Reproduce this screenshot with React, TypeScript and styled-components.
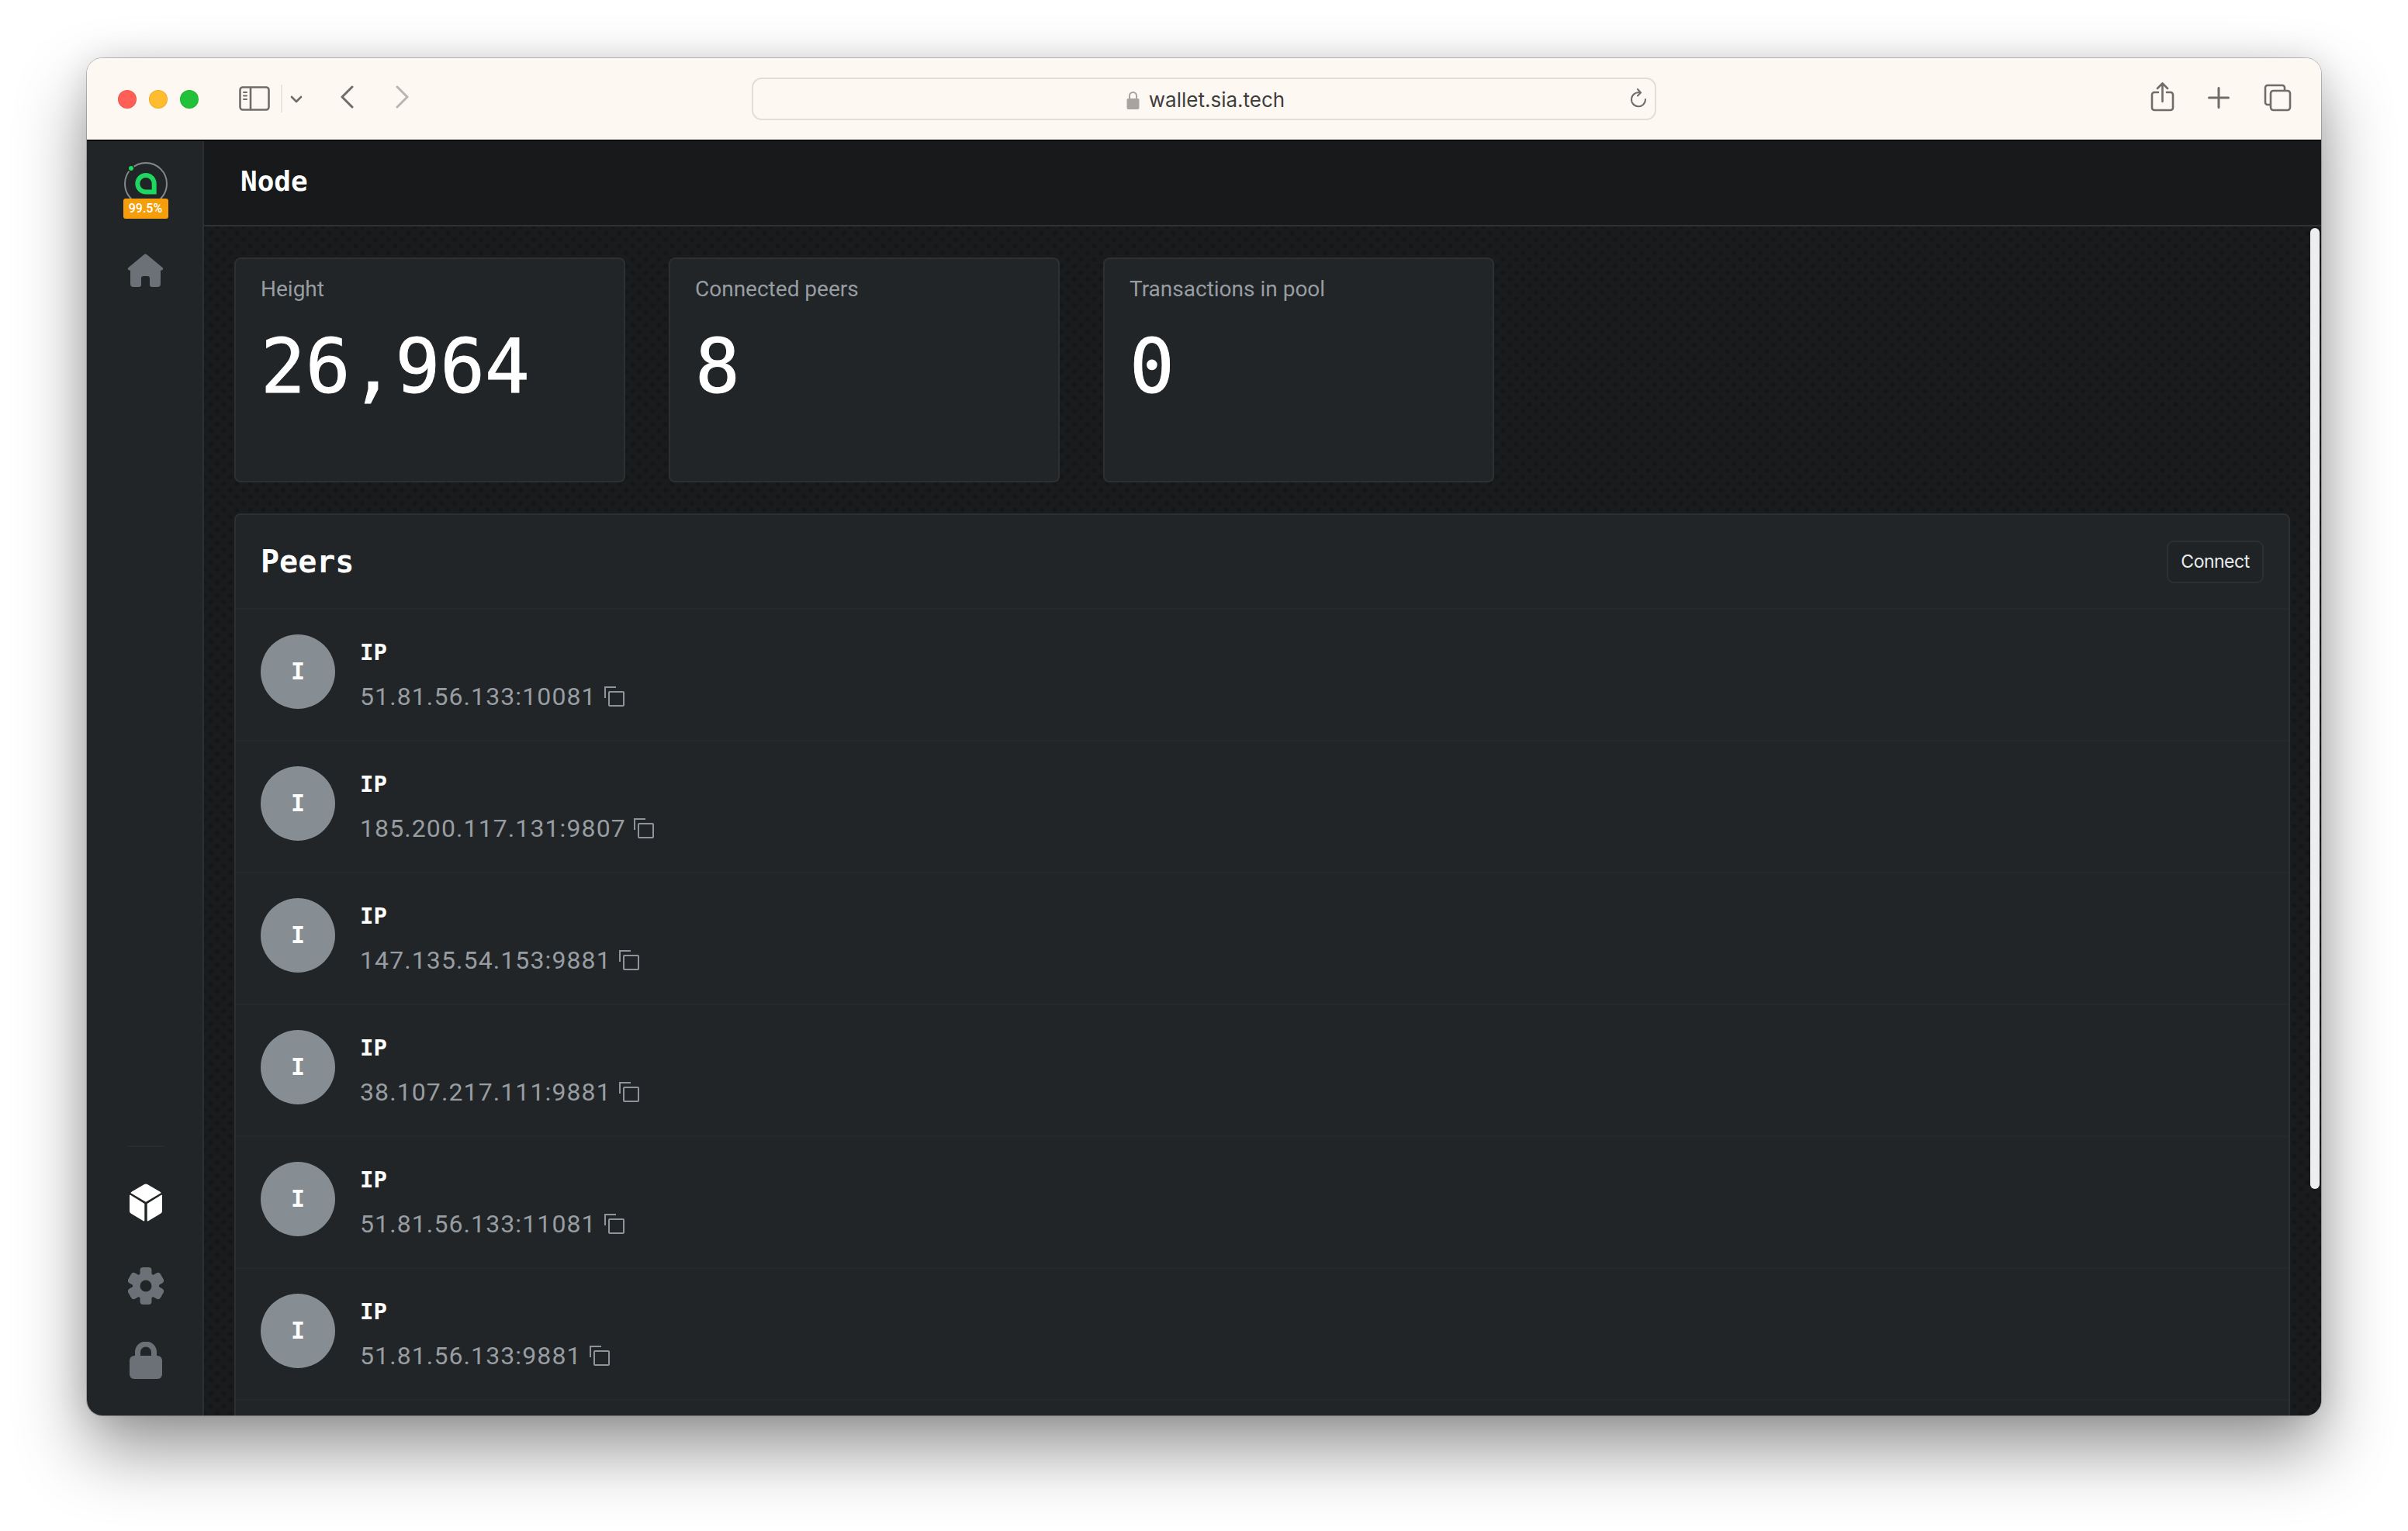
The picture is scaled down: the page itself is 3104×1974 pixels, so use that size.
import React from 'react';
import styled, { createGlobalStyle } from 'styled-components';

const Global = createGlobalStyle`
  html, body { margin: 0; padding: 0; background: #fff; }
  * { box-sizing: border-box; }
`;

const MONO = `"DejaVu Sans Mono", "Liberation Mono", monospace`;
const SANS = `"Roboto", "Noto Sans", sans-serif`;
const UI = `"Inter", "Liberation Sans", sans-serif`;

const Page = styled.div`
  width: 3104px;
  height: 1974px;
  padding: 75px 112px 149px;
  overflow: hidden;
  background: #fff;
`;
const Win = styled.div`
  width: 2880px;
  height: 1750px;
  border-radius: 20px;
  overflow: hidden;
  display: flex;
  flex-direction: column;
  box-shadow: 0 0 0 1px rgba(0, 0, 0, 0.22), 0 44px 90px rgba(0, 0, 0, 0.42), 0 0 40px rgba(0, 0, 0, 0.1);
`;
const Chrome = styled.div`
  height: 107px;
  flex: none;
  background: #fdf8f2;
  border-bottom: 2px solid #0c0d0e;
  display: flex;
  align-items: flex-start;
  padding: 25px 38px 0 40px;
`;
const Lights = styled.div`
  display: flex;
  gap: 16px;
  margin-top: 16px;
`;
const Light = styled.span<{ $c: string }>`
  width: 24px;
  height: 24px;
  border-radius: 50%;
  background: ${(p) => p.$c};
  box-shadow: inset 0 0 0 1px rgba(0, 0, 0, 0.08);
`;
const ToolIcon = styled.svg<{ $ml: number; $mt: number }>`
  display: block;
  flex: none;
  margin-left: ${(p) => p.$ml}px;
  margin-top: ${(p) => p.$mt}px;
  fill: none;
  stroke: #716c67;
  stroke-width: 2.6;
  stroke-linecap: round;
  stroke-linejoin: round;
`;
const Url = styled.div`
  position: relative;
  flex: none;
  width: 1166px;
  height: 55px;
  margin-left: 441px;
  margin-right: auto;
  border: 2px solid #e3ddd7;
  border-radius: 13px;
  display: flex;
  align-items: center;
  justify-content: center;
  gap: 12px;
  color: #403e3c;
  font: 400 26px/1 ${UI};
  padding-top: 2px;
  padding-left: 4px;
`;
const Reload = styled.svg`
  position: absolute;
  right: 10px;
  top: 12px;
  fill: none;
  stroke: #716c67;
  stroke-width: 2;
  stroke-linecap: round;
  stroke-linejoin: round;
`;
const Body = styled.div`
  flex: 1;
  min-height: 0;
  display: flex;
`;
const Side = styled.aside`
  width: 151px;
  flex: none;
  background: #212527;
  border-right: 2px solid #2c3033;
  display: flex;
  flex-direction: column;
  align-items: center;
  padding: 26px 0 47px 2px;
`;
const Logo = styled.div`
  position: relative;
  width: 58px;
  height: 74px;
`;
const Badge = styled.div`
  position: absolute;
  left: 0;
  bottom: 0;
  width: 58px;
  height: 26px;
  background: #f59e0b;
  border-radius: 3px;
  color: #fff;
  font: 500 16px/26px ${SANS};
  text-align: center;
`;
const SideIcon = styled.svg<{ $mt: number }>`
  display: block;
  flex: none;
  margin-top: ${(p) => p.$mt}px;
`;
const SideRule = styled.div`
  width: 48px;
  height: 2px;
  margin-top: auto;
  background: #272b2e;
`;
const Content = styled.div`
  flex: 1;
  min-width: 0;
  display: flex;
  flex-direction: column;
  background: #17191b;
`;
const Head = styled.header`
  height: 110px;
  flex: none;
  padding: 0 0 4px 47px;
  border-bottom: 2px solid #2e3235;
  display: flex;
  align-items: center;
  color: #fff;
  font: 700 36px/1 ${MONO};
`;
const Main = styled.main`
  position: relative;
  flex: 1;
  min-height: 0;
  overflow: hidden;
  padding: 40px 40px 0 39px;
  background-color: #191b1d;
  background-image: radial-gradient(circle, #141617 2px, transparent 4px),
    radial-gradient(circle, #141617 2px, transparent 4px);
  background-size: 17px 17px;
  background-position: 0 0, 8.5px 8.5px;
`;
const Scroll = styled.div`
  position: absolute;
  top: 2px;
  right: 2px;
  width: 12px;
  height: 1239px;
  border-radius: 6px;
  background: #eceef0;
`;
const Stats = styled.div`
  display: flex;
  gap: 56px;
`;
const Card = styled.section`
  width: 504px;
  height: 290px;
  padding: 21px 32px;
  background: #212527;
  border: 2px solid #2c3033;
  border-radius: 8px;
`;
const Label = styled.div`
  color: #979da2;
  font: 400 28px/36px ${SANS};
`;
const Value = styled.div`
  margin-top: 28px;
  color: #fff;
  font: 400 96px/108px ${MONO};
  -webkit-text-stroke: 1px #fff;
`;
const Panel = styled.section`
  margin-top: 40px;
  padding-bottom: 60px;
  background: #212527;
  border: 2px solid #2c3033;
  border-radius: 8px;
`;
const PanelHead = styled.div`
  height: 122px;
  border-bottom: 2px solid #25292b;
  display: flex;
  align-items: center;
  justify-content: space-between;
  padding: 0 32px;
`;
const Title = styled.h2`
  margin: 0;
  color: #fff;
  font: 700 40px/1 ${MONO};
`;
const Btn = styled.button`
  width: 125px;
  height: 55px;
  padding: 0;
  background: #1f2325;
  border: 2px solid #2c3033;
  border-radius: 9px;
  color: #e9ebed;
  font: 400 23px/1 ${UI};
  letter-spacing: -0.5px;
`;
const Row = styled.div`
  height: 170px;
  border-bottom: 2px solid #25292b;
  display: flex;
  align-items: flex-start;
  gap: 32px;
  padding: 32px 32px 0;
`;
const Avatar = styled.div`
  width: 96px;
  height: 96px;
  border-radius: 50%;
  background: #868d93;
  display: flex;
  align-items: center;
  justify-content: center;
  color: #fff;
  font: 700 30px/1 ${MONO};
  flex: none;
`;
const Info = styled.div`
  display: flex;
  flex-direction: column;
`;
const Key = styled.div`
  color: #fff;
  margin-top: 1px;
  font: 700 29px/44px ${MONO};
`;
const Addr = styled.div`
  margin-top: 15px;
  display: flex;
  align-items: center;
  gap: 10px;
  color: #979da2;
  letter-spacing: 1.1px;
  font: 400 32px/40px ${SANS};
`;

const CopyIcon = () => (
  <svg width="26" height="26" viewBox="0 0 26 26" fill="none" stroke="#8e9499" strokeWidth="2">
    <path d="M1 15V1h14" />
    <rect x="6" y="7" width="19" height="18" rx="1" />
  </svg>
);

const peers = [
  '51.81.56.133:10081',
  '185.200.117.131:9807',
  '147.135.54.153:9881',
  '38.107.217.111:9881',
  '51.81.56.133:11081',
  '51.81.56.133:9881',
];

export default function App() {
  return (
    <Page>
      <Global />
      <Win>
        <Chrome>
          <Lights>
            <Light $c="#ff5f57" />
            <Light $c="#febc2e" />
            <Light $c="#22c13a" />
          </Lights>
          <ToolIcon $ml={52} $mt={11} width="40" height="32" viewBox="0 0 40 32">
            <rect x="1.5" y="1.5" width="37" height="29" rx="3.5" />
            <path d="M15 2v28" />
            <path d="M6 8h4M6 12.500h4M6 17h4" strokeWidth="2" />
          </ToolIcon>
          <ToolIcon $ml={14} $mt={9} width="2" height="36" viewBox="0 0 2 36" style={{ stroke: '#e9e4de' }}>
            <path d="M1 0v36" strokeWidth="2" />
          </ToolIcon>
          <ToolIcon $ml={10} $mt={23} width="16" height="11" viewBox="0 0 16 11">
            <path d="M2 2l6 6 6-6" />
          </ToolIcon>
          <ToolIcon $ml={48} $mt={10} width="18" height="30" viewBox="0 0 18 30">
            <path d="M16 2L3 15l13 13" strokeWidth="3" />
          </ToolIcon>
          <ToolIcon $ml={54} $mt={10} width="18" height="30" viewBox="0 0 18 30" style={{ stroke: '#b9b5b0' }}>
            <path d="M2 2l13 13L2 28" strokeWidth="3" />
          </ToolIcon>
          <Url>
            <svg width="17" height="24" viewBox="0 0 17 24">
              <path d="M4 11V6.500a4.500 4.500 0 0 1 9 0V11" fill="none" stroke="#a8a39e" strokeWidth="2" />
              <rect x="0.500" y="10" width="16" height="14" rx="2" fill="#a8a39e" />
            </svg>
            wallet.sia.tech
            <Reload width="22" height="27" viewBox="0 0 22 27">
              <path d="M13 5.500A9 9 0 1 0 20 14" />
              <path d="M10 1l4 4.500-4 4" />
            </Reload>
          </Url>
          <ToolIcon $ml={0} $mt={6} width="31" height="38" viewBox="0 0 31 38">
            <path d="M10 13H5a3 3 0 0 0-3 3v17a3 3 0 0 0 3 3h21a3 3 0 0 0 3-3V16a3 3 0 0 0-3-3h-5" />
            <path d="M15.500 25V2M9 8l6.500-6.500L22 8" />
          </ToolIcon>
          <ToolIcon $ml={43} $mt={12} width="28" height="28" viewBox="0 0 28 28">
            <path d="M14 1.500v25M1.500 14h25" strokeWidth="3" />
          </ToolIcon>
          <ToolIcon $ml={44} $mt={8} width="36" height="36" viewBox="0 0 36 36">
            <path d="M8 27H5a3 3 0 0 1-3-3V5a3 3 0 0 1 3-3h19a3 3 0 0 1 3 3v3" />
            <rect x="9" y="9" width="25" height="25" rx="3.500" />
          </ToolIcon>
        </Chrome>
        <Body>
          <Side>
            <Logo>
              <svg width="58" height="58" viewBox="0 0 58 58">
                <circle cx="29" cy="29" r="27" fill="none" stroke="#84898d" strokeWidth="2" />
                <circle cx="10" cy="9" r="3" fill="#1ed660" stroke="#212527" strokeWidth="3" paintOrder="stroke" />
                <path
                  fill="#1ed660"
                  fillRule="evenodd"
                  d="M29 15a13.700 13.700 0 0 1 13.700 13.700V42.400H29A13.700 13.700 0 0 1 29 15zM29 21a7.700 7.700 0 0 0 0 15.400h7.700V28.700A7.700 7.700 0 0 0 29 21z"
                />
              </svg>
              <Badge>99.5%</Badge>
            </Logo>
            <SideIcon $mt={45} width="47" height="43" viewBox="0 0 47 43" fill="#6b7177">
              <path d="M22 1a2.500 2.500 0 0 1 3 0l20.500 17a2 2 0 0 1-1.200 3.500H43V39a4 4 0 0 1-4 4h-7a3 3 0 0 1-3-3V32a3 3 0 0 0-3-3h-5a3 3 0 0 0-3 3v8a3 3 0 0 1-3 3H8a4 4 0 0 1-4-4V21.500H2.700A2 2 0 0 1 1.500 18z" />
            </SideIcon>
            <SideRule />
            <SideIcon $mt={47} width="42" height="49" viewBox="0 0 42 49" fill="#fff">
              <path d="M19 1a4 4 0 0 1 4 0l17 10a1 1 0 0 1 0 1.500L21 23.700 2 12.500a1 1 0 0 1 0-1.500z" />
              <path d="M0 15.500a.8.800 0 0 1 1.200-.7L19.300 26v21.500a1 1 0 0 1-1.500.8L2 38.800a4 4 0 0 1-2-3.400z" />
              <path d="M42 15.500a.8.800 0 0 0-1.200-.7L22.700 26v21.500a1 1 0 0 0 1.500.8L40 38.800a4 4 0 0 0 2-3.400z" />
            </SideIcon>
            <SideIcon $mt={59} width="46" height="48" viewBox="0 0 46 48" fill="#6b7177">
              <g>
                <rect x="15.500" y="0" width="15" height="48" rx="4" />
                <rect x="15.500" y="0" width="15" height="48" rx="4" transform="rotate(60 23 24)" />
                <rect x="15.500" y="0" width="15" height="48" rx="4" transform="rotate(120 23 24)" />
                <circle cx="23" cy="24" r="17" />
                <circle cx="23" cy="24" r="7.500" fill="#212527" />
              </g>
            </SideIcon>
            <SideIcon $mt={48} width="42" height="48" viewBox="0 0 42 48" fill="#6b7177">
              <path d="M10.500 22V13.500a10.500 10.500 0 0 1 21 0V22" fill="none" stroke="#6b7177" strokeWidth="7" />
              <rect x="0" y="18" width="42" height="30" rx="6" />
            </SideIcon>
          </Side>
          <Content>
            <Head>Node</Head>
            <Main>
              <Stats>
                <Card>
                  <Label>Height</Label>
                  <Value>26,964</Value>
                </Card>
                <Card>
                  <Label>Connected peers</Label>
                  <Value>8</Value>
                </Card>
                <Card>
                  <Label>Transactions in pool</Label>
                  <Value>0</Value>
                </Card>
              </Stats>
              <Panel>
                <PanelHead>
                  <Title>Peers</Title>
                  <Btn>Connect</Btn>
                </PanelHead>
                {peers.map((p) => (
                  <Row key={p}>
                    <Avatar>I</Avatar>
                    <Info>
                      <Key>IP</Key>
                      <Addr>
                        {p}
                        <CopyIcon />
                      </Addr>
                    </Info>
                  </Row>
                ))}
              </Panel>
              <Scroll />
            </Main>
          </Content>
        </Body>
      </Win>
    </Page>
  );
}
